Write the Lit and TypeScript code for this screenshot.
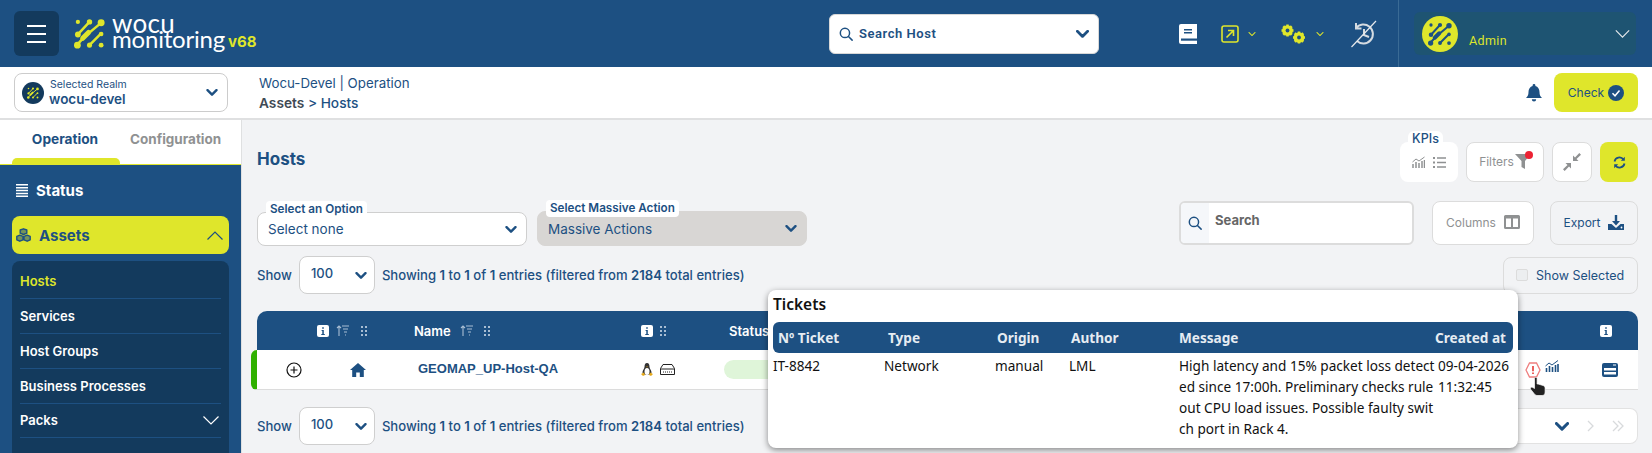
import { LitElement, html, css, svg } from "lit";
import { customElement } from "lit/decorators.js";

const logoMark = (dot: string, w: number, h: number) => html`<svg width=${w} height=${h} viewBox="0 0 32 32" fill=${dot} stroke=${dot}>
  ${svg`<g stroke-width="2.6" stroke-linecap="round" fill="none">
    <path d="M16 4 4 17"/>
    <path d="M28 5 10 20 3 28"/>
    <path d="M16 28 27 17"/>
    <path d="M9 21 15 15" stroke-width="5.2"/>
  </g>
  <g stroke="none">
    <circle cx="4" cy="4" r="2.2"/><circle cx="16" cy="4" r="2.8"/><circle cx="28" cy="5" r="3.6"/>
    <circle cx="4" cy="17" r="3"/><circle cx="28" cy="16.500" r="2.400"/>
    <circle cx="3.500" cy="28" r="3.500"/><circle cx="16" cy="28" r="2.600"/><circle cx="28" cy="28" r="2.500"/>
  </g>`}
</svg>`;

const chev = (w = 12, sw = 2.6, c = "#1d5082") => html`<svg class="chev" width=${w} height=${Math.round(w * 0.62)} viewBox="0 0 12 7.5" fill="none" stroke=${c} stroke-width=${sw} stroke-linecap="round" stroke-linejoin="round">${svg`<path d="M1.2 1.2 6 6 10.8 1.2"/>`}</svg>`;
const thinChev = (w: number, c: string, up = false) => html`<svg width=${w} height=${Math.round(w * 0.56)} viewBox="0 0 16 9" fill="none" stroke=${c} stroke-width=${(16 / w) * 1.2}>${svg`<path d=${up ? "M.5 8.5 8 1 15.5 8.5" : "M.5.5 8 8 15.5.5"}/>`}</svg>`;
const searchIcon = (s: number) => html`<svg width=${s} height=${s} viewBox="0 0 16 16" fill="none" stroke="#1d5082" stroke-width="1.7" stroke-linecap="round">${svg`<circle cx="6.8" cy="6.8" r="5.3"/><path d="M10.8 10.8 15 15"/>`}</svg>`;
const infoIcon = html`<svg class="ii" width="12" height="12" viewBox="0 0 12 12">${svg`<rect width="12" height="12" rx="2" fill="#fff"/><path d="M4.6 5h2.2v4h1v1H4.3V9h1V6h-.7zM5.2 2.2h1.6v1.6H5.2z" fill="#1d5082"/>`}</svg>`;
const sortIcon = html`<svg width="13" height="11" viewBox="0 0 13 11" fill="none" stroke="#a9bed3" stroke-width="1.1">${svg`<path d="M3 11V1M1 3l2-2 2 2M6 1h7M7 4h5M8 7h3M9 10h1"/>`}</svg>`;
const dotsIcon = html`<svg width="6" height="10" viewBox="0 0 6 10" fill="#a9bed3">${svg`<rect width="2" height="2"/><rect x="4" width="2" height="2"/><rect y="4" width="2" height="2"/><rect x="4" y="4" width="2" height="2"/><rect y="8" width="2" height="2"/><rect x="4" y="8" width="2" height="2"/>`}</svg>`;
const gear = (x: number, y: number, r: number) => svg`<g transform="translate(${x} ${y})"><circle r=${r * 0.62} fill="none" stroke="#dfe62b" stroke-width=${r * 0.55}/><g stroke="#dfe62b" stroke-width=${r * 0.42}>${[0, 45, 90, 135].map((a) => svg`<path transform="rotate(${a})" d="M0 ${-r} V${r}"/>`)}</g><circle r=${r * 0.32} fill="#1d5082"/></g>`;

@customElement("app-root")
export class AppRoot extends LitElement {
  static styles = css`
    :host { display: block; width: 1652px; height: 453px; overflow: hidden; position: relative; background: #f2f3f5; font-family: Inter, "Noto Sans", sans-serif; color: #1d5082; }
    * { box-sizing: border-box; }
    svg { display: block; flex: none; }

    .top { height: 67px; background: #1d5082; display: flex; align-items: center; }
    .burger { width: 45px; height: 45px; margin-left: 14px; background: #133a5d; border-radius: 6px; display: flex; flex-direction: column; justify-content: center; align-items: center; gap: 6px; }
    .burger i { display: block; width: 19px; height: 2px; background: #fff; }
    .logo { margin-left: 15px; width: 240px; display: flex; align-items: center; }
    .brand { margin-left: 7px; color: #fff; font-family: Lato, sans-serif; position: relative; top: -3px; white-space: nowrap; }
    .brand b { font-weight: 400; display: block; font-size: 24px; line-height: 15px; letter-spacing: -.2px; }
    .brand b:first-child { font-size: 26px; letter-spacing: .3px; }
    .ver { font: 700 15px Inter, sans-serif; color: #dfe62b; margin-left: 3px; align-self: flex-end; margin-bottom: -1px; }
    .hostsearch { margin-left: 515px; width: 270px; height: 40px; background: #fff; border-radius: 6px; border: 1px solid #d8d8d8; display: flex; align-items: center; padding: 0 9px; gap: 6px; font: 600 13px Roboto, sans-serif; letter-spacing: .55px; }
    .hostsearch span { flex: 1; }
    .ticons { display: flex; align-items: center; margin-left: 80px; }
    .divider { width: 1px; height: 67px; background: #3a6b95; margin-left: 21px; }
    .admin { margin-left: 15px; width: 222px; height: 43px; background: #1e5472; border-radius: 6px; display: flex; align-items: center; padding: 0 6px 0 8px; }
    .avatar { width: 36px; height: 36px; border-radius: 50%; background: #dfe62b; display: flex; align-items: center; justify-content: center; }
    .admin span { color: #dfe62b; font: 400 12.5px Roboto, sans-serif; margin-left: 11px; flex: 1; padding-top: 14px; letter-spacing: .4px; }

    .sub { height: 53px; background: #fff; border-bottom: 2px solid #dfe0e1; display: flex; align-items: center; padding: 0 14px; }
    .realm { width: 214px; height: 39px; border: 1px solid #ccc; border-radius: 8px; display: flex; align-items: center; padding: 0 9px 0 7px; }
    .rico { width: 22px; height: 22px; border-radius: 50%; background: #133a5d; display: flex; align-items: center; justify-content: center; }
    .rtxt { flex: 1; margin-left: 5px; }
    .rtxt small { display: block; font-size: 10.5px; line-height: 12px; padding-left: 1px; }
    .rtxt strong { display: block; font-size: 13.5px; line-height: 16px; font-weight: 600; }
    .crumb { margin-left: 31px; flex: 1; font-size: 13.3px; line-height: 20px; padding-top: 1px; }
    .crumb b { display: block; font-weight: 500; font-size: 13.7px; }
    .crumb b em { font-style: normal; color: #3f4a55; font-weight: 600; }
    .check { margin-left: 12px; width: 84px; height: 39px; border-radius: 8px; background: #dfe62b; display: flex; align-items: center; justify-content: center; gap: 4px; font-size: 12px; }

    .body { display: flex; height: 333px; }
    aside { width: 242px; flex: none; background: #1d5082; border-right: 1px solid #dfe0e1; }
    .tabs { height: 45px; background: #fff; display: flex; border-bottom: 1px solid #dfe62b; position: relative; font-weight: 700; font-size: 13.7px; padding-top: 11px; }
    .tabs .t1 { width: 130px; text-align: center; }
    .tabs .t2 { color: #8f9192; font-size: 13.5px; }
    .tabs i { position: absolute; left: 12px; top: 38px; width: 108px; height: 6px; background: #dfe62b; border-radius: 5px 5px 0 0; }
    .status { height: 51px; display: flex; align-items: center; gap: 8px; padding-left: 16px; color: #fff; font-weight: 700; font-size: 15px; }
    .assets { margin: 0 12px; height: 38px; background: #dfe62b; border-radius: 8px; display: flex; align-items: center; padding: 0 6px 0 4px; gap: 8px; font-weight: 700; font-size: 15px; }
    .assets span { flex: 1; }
    .menu { margin: 7px 12px 0; background: #133a5d; border-radius: 8px 8px 0 0; height: 192px; padding: 3.5px 8px 0; }
    .menu div { height: 34.75px; border-bottom: 1px solid #1d5082; display: flex; align-items: center; justify-content: space-between; color: #fff; font-weight: 600; font-size: 13px; padding-right: 2px; }
    .menu div.on { color: #dfe62b; }

    main { flex: 1; padding: 22px 14px 0 15px; min-width: 0; position: relative; }
    .r1 { display: flex; align-items: center; height: 40px; gap: 8px; }
    h1 { margin: 0; flex: 1; font-size: 17px; font-weight: 700; padding-bottom: 7px; }
    .btn { height: 40px; border: 1px solid #dcdcdc; background: #fff; border-radius: 8px; display: flex; align-items: center; justify-content: center; font-size: 12px; color: #8f9192; gap: 1px; position: relative; }
    .kpis { width: 58px; border: 0; gap: 8px; position: relative; }
    .kpis span { position: absolute; left: 8px; top: -11px; width: 35px; height: 15px; background: #fff; border-radius: 6px 6px 0 0; color: #1d5082; font-size: 12.5px; font-weight: 500; text-align: center; line-height: 15px; }
    .filters { width: 78px; padding-bottom: 2px; }
    .filters u { position: absolute; right: 10px; top: 8px; width: 8px; height: 8px; border-radius: 50%; background: #ec2233; }
    .comp { width: 40px; }
    .refresh { width: 38px; background: #dfe62b; border: 0; }

    .r2 { display: flex; height: 45px; margin-top: 19px; align-items: flex-start; }
    .sel { position: relative; width: 270px; height: 34px; margin-top: 11px; background: #fff; border: 1px solid #cfcfcf; border-radius: 8px; display: flex; align-items: center; justify-content: space-between; padding: 0 9px 0 10px; font-size: 13.5px; }
    .sel.dis { background: #d8d6d4; border-color: #d8d6d4; margin-left: 10px; margin-top: 10px; height: 35px; }
    .sel label { position: absolute; top: -12px; left: 8px; height: 17px; background: #fff; border-radius: 4px; padding: 0 4px; font-size: 11.7px; font-weight: 600; line-height: 17px; white-space: nowrap; }
    .qs { margin-left: auto; margin-top: 0; width: 235px; height: 44px; border: 2px solid #dcdcdc; border-radius: 6px; background: #fff; display: flex; align-items: stretch; overflow: hidden; font-weight: 700; font-size: 13px; color: #666; }
    .qs b { width: 28px; background: #f5f7fa; display: flex; align-items: center; justify-content: center; }
    .qs span { display: flex; align-items: center; padding: 0 0 6px 6px; }
    .b2 { height: 44px; margin-left: 18px; border: 1px solid #dcdcdc; border-radius: 8px; background: #fff; display: flex; align-items: center; justify-content: center; gap: 8px; font-size: 12px; color: #8f9192; width: 102px; padding-bottom: 2px; }
    .b2.exp { margin-left: 16px; width: 88px; background: transparent; color: #1d5082; }

    .r3 { display: flex; align-items: center; height: 38px; margin-top: 10px; font-size: 13.1px; font-weight: 500; }
    .sm { width: 76px; height: 38px; border: 1px solid #cfcfcf; background: #fff; border-radius: 8px; display: flex; align-items: center; justify-content: space-between; padding: 0 7px 4px 11px; margin: 0 7px 0 7px; font-size: 13px; font-weight: 500; }
    .sm svg { margin-top: 5px; }
    .info { flex: 1; }
    .info b { font-weight: 600; }
    .shsel { width: 135px; height: 37px; border: 1px solid #dcdcdc; border-radius: 8px; display: flex; align-items: center; padding-left: 12px; gap: 8px; font-weight: 400; font-size: 12.5px; }
    .shsel i { width: 12px; height: 12px; background: #eceef0; border: 1px solid #dcdcdc; border-radius: 2px; }

    .table { margin-top: 17px; }
    .thead, .trow { display: grid; grid-template-columns: 60px 97px 227px 83px 786px 90px 39px; align-items: center; }
    .thead { height: 39px; background: #1d5082; border-radius: 10px 10px 0 0; color: #fff; font-weight: 600; font-size: 13px; }
    .thead > div { display: flex; align-items: center; }
    .trow { height: 40px; background: #fff; border-bottom: 1px solid #dcdcdc; border-left: 6px solid #2fb000; border-radius: 6px 0 0 6px; margin-left: -6px; }
    .trow > div { display: flex; align-items: center; }
    .gap { gap: 7px; }
    .name { font: 700 13px "Liberation Sans", sans-serif; padding: 0 0 2px 4px; }
    .pill { width: 100px; height: 19px; background: #dff5d9; border-radius: 10px; }
    .pager { height: 36px; margin-left: auto; width: 120px; background: #fff; border: 1px solid #e2e2e2; border-left: 0; border-radius: 0 8px 8px 0; display: flex; align-items: center; gap: 18px; padding-left: 37px; }
    .r4 { margin-top: 17px; }

    .pop { position: absolute; left: 768px; top: 290px; width: 750px; height: 158px; background: #fff; border-radius: 8px; box-shadow: 0 2px 6px rgba(0,0,0,.45); font-family: "Noto Sans", sans-serif; color: #111; padding: 4px 5px; font-size: 13.6px; z-index: 5; }
    .pop h3 { margin: 0; font-size: 15.5px; font-weight: 600; line-height: 21px; }
    .grid { display: grid; grid-template-columns: 111px 111px 74px 110px 258px 76px; margin-top: 7px; }
    .hd { background: #1d5082; height: 31px; color: #e6ecf2; font-weight: 700; display: flex; align-items: center; padding-left: 5px; margin-bottom: 2px; white-space: nowrap; }
    .hd:first-child { border-radius: 6px 0 0 6px; }
    .hd.p2 { padding-left: 2px; }
    .hd.p1 { padding-left: 0; }
    .hd:nth-child(6) { border-radius: 0 6px 6px 0; justify-content: flex-end; padding: 0 7px 0 0; }
    .c { line-height: 21px; white-space: nowrap; }
    .c span { display: block; }
    .cr { padding-left: 1px; }
    .hand { position: absolute; left: 1530px; top: 377px; z-index: 6; }
  `;

  render() {
    const lime = "#dfe62b";
    return html`
      <div class="top">
        <div class="burger"><i></i><i></i><i></i></div>
        <div class="logo">${logoMark(lime, 31, 33)}<div class="brand"><b>wocu</b><b>monitoring</b></div><span class="ver">v68</span></div>
        <div class="hostsearch">${searchIcon(14)}<span>Search Host</span>${chev(13)}</div>
        <div class="ticons">
          <svg width="18" height="20" viewBox="0 0 18 20">${svg`<path d="M2 0h16v20H2a2 2 0 0 1-2-2V2a2 2 0 0 1 2-2z" fill="#fff"/><path d="M5 5h8v1.6H5zM5 8h8v1.6H5z" fill="#1d5082"/><path d="M2 14.5h16v2.2H2z" fill="#1d5082"/>`}</svg>
          <svg style="margin-left:24px" width="18" height="18" viewBox="0 0 18 18" fill="none" stroke="#dfe62b" stroke-width="1.6">${svg`<rect x="1" y="1" width="16" height="16" rx="2"/><path d="M5.5 12.5 12.5 5.5M7 5.5h5.5V11"/>`}</svg>
          <span style="margin-left:9px">${thinChev(8, lime)}</span>
          <svg style="margin-left:25px" width="25" height="20" viewBox="0 0 25 20">${gear(6.5, 6.5, 6)}${gear(18, 13.5, 6)}</svg>
          <span style="margin-left:10px">${thinChev(8, lime)}</span>
          <svg style="margin-left:26px" width="27" height="28" viewBox="0 0 27 28" fill="none" stroke="#d5dbe1" stroke-width="2">${svg`<path d="M6 8a9.5 9.5 0 1 1 1 13M6 3v5.5h5.5M14 9v6l5 2"/><path d="M1.5 27 26 1" stroke-width="1.2" stroke="#e6e9ec"/>`}</svg>
        </div>
        <div class="divider"></div>
        <div class="admin"><div class="avatar">${logoMark("#1d5082", 24, 26)}</div><span>Admin</span>${thinChev(15, "#e6e9ec")}</div>
      </div>

      <div class="sub">
        <div class="realm">
          <div class="rico">${logoMark(lime, 12, 12)}</div>
          <div class="rtxt"><small>Selected Realm</small><strong>wocu-devel</strong></div>
          ${chev(12)}
        </div>
        <div class="crumb">Wocu-Devel | Operation<b><em>Assets</em> &gt; Hosts</b></div>
        <svg width="16" height="18" viewBox="0 0 16 18" fill="#1d5082">${svg`<path d="M8 0a1.4 1.4 0 0 1 1.4 1.4v.5C12 2.500 13.500 5 13.500 8c0 3 .8 4.500 2.500 6H0c1.700-1.500 2.500-3 2.500-6 0-3 1.500-5.500 4.100-6.100v-.5A1.400 1.400 0 0 1 8 0z"/><path d="M5.800 15.200h4.400a2.200 2.200 0 0 1-4.400 0z"/>`}</svg>
        <div class="check">Check <svg width="16" height="16" viewBox="0 0 16 16">${svg`<circle cx="8" cy="8" r="8" fill="#1d5082"/><path d="M4.500 8.300 7 10.800 11.500 5.500" fill="none" stroke="#fff" stroke-width="1.500"/>`}</svg></div>
      </div>

      <div class="body">
        <aside>
          <div class="tabs"><span class="t1">Operation</span><span class="t2">Configuration</span><i></i></div>
          <div class="status">
            <svg width="12" height="13" viewBox="0 0 12 13" fill="#fff">${svg`<path d="M0 0h12v1.500H0zM0 2.900h12v1.500H0zM0 5.800h12v1.500H0zM0 8.700h12v1.500H0zM0 11.500h12v1.500H0z"/>`}</svg>
            Status
          </div>
          <div class="assets">
            <svg width="15" height="14" viewBox="0 0 15 14" fill="none" stroke="#1d5082" stroke-width="1.400" stroke-linejoin="round">${svg`<path d="M7.500.8 10.800 2v3.200L7.500 6.500 4.200 5.200V2zM3.800 7.200 7 8.400v3.400l-3.200 1.400L.8 11.800V8.400zM11.200 7.200l3 1.200v3.400l-3 1.400L8 11.800V8.400z" fill="#1d5082" fill-opacity=".55"/>`}</svg>
            <span>Assets</span>${thinChev(16, "#1d5082", true)}
          </div>
          <div class="menu">
            <div class="on">Hosts</div><div>Services</div><div>Host Groups</div><div>Business Processes</div>
            <div>Packs ${thinChev(16, "#fff")}</div>
          </div>
        </aside>
        <main>
          <div class="r1">
            <h1>Hosts</h1>
            <div class="btn kpis"><span>KPIs</span>
              <svg width="13" height="12" viewBox="0 0 13 12" fill="none" stroke="#8f9192">${svg`<path d="M.5 6 4 3l3 2 5.500-4" stroke-width="1"/><path d="M1 12V8M4 12V6M7 12V7M10 12V5M12.500 12V4" stroke-width="1.500"/>`}</svg>
              <svg width="13" height="11" viewBox="0 0 13 11" fill="#8f9192">${svg`<path d="M0 0h2v2H0zM4 .300h9v1.400H4zM0 4.500h2v2H0zM4 4.800h9v1.400H4zM0 9h2v2H0zM4 9.300h9v1.400H4z"/>`}</svg>
            </div>
            <div class="btn filters">Filters<svg width="16" height="15" viewBox="0 0 16 15" fill="#8f9192">${svg`<path d="M0 0h16L10 7v8L6.500 13V7z"/>`}</svg><u></u></div>
            <div class="btn comp"><svg width="18" height="18" viewBox="0 0 18 18" fill="#8f9192">${svg`<path d="M10 8V2.500l2 2L16.300 0 18 1.700 13.500 6l2 2zM8 10v5.500l-2-2L1.700 18 0 16.300 4.500 12l-2-2z"/>`}</svg></div>
            <div class="btn refresh"><svg width="13" height="13" viewBox="0 0 13 13" fill="none" stroke="#1d5082" stroke-width="1.800">${svg`<path d="M1.500 5.500A5 5 0 0 1 10.500 3.500M11.500 7.500A5 5 0 0 1 2.500 9.500"/><path d="M11.800.8v4H7.800zM1.200 12.200v-4h4z" fill="#1d5082" stroke="none"/>`}</svg></div>
          </div>

          <div class="r2">
            <div class="sel"><label>Select an Option</label>Select none ${chev(12)}</div>
            <div class="sel dis"><label>Select Massive Action</label>Massive Actions ${chev(12)}</div>
            <div class="qs"><b>${searchIcon(14)}</b><span>Search</span></div>
            <div class="b2">Columns<svg width="16" height="14" viewBox="0 0 16 14" fill="#8f9192">${svg`<path d="M1.500 0h13A1.500 1.500 0 0 1 16 1.500v11a1.500 1.500 0 0 1-1.500 1.500h-13A1.500 1.500 0 0 1 0 12.500v-11A1.500 1.500 0 0 1 1.500 0zM2 3.500V12h5V3.500zM9 3.500V12h5V3.500z" fill-rule="evenodd"/>`}</svg></div>
            <div class="b2 exp">Export<svg width="16" height="15" viewBox="0 0 16 15" fill="#1d5082">${svg`<path d="M6.800 0h2.400v6H12L8 10.500 4 6h2.800zM0 9h3.500L8 13l4.500-4H16v6H0z"/><circle cx="13.500" cy="12.500" r=".9" fill="#fff"/>`}</svg></div>
          </div>

          <div class="r3">Show <div class="sm">100 ${chev(12)}</div>
            <div class="info">Showing <b>1</b> to <b>1</b> of <b>1</b> entries (filtered from <b>2184</b> total entries)</div>
            <div class="shsel"><i></i>Show Selected</div>
          </div>

          <div class="table">
            <div class="thead">
              <div></div>
              <div class="gap">${infoIcon}${sortIcon}<span style="margin-left:5px">${dotsIcon}</span></div>
              <div style="padding-left:0">Name <span style="margin-left:9px">${sortIcon}</span><span style="margin-left:11px">${dotsIcon}</span></div>
              <div class="gap">${infoIcon}${dotsIcon}</div>
              <div style="padding-left:5px">Status</div>
              <div></div>
              <div>${infoIcon}</div>
            </div>
            <div class="trow">
              <div style="padding-left:29px"><svg width="16" height="16" viewBox="0 0 16 16" fill="none" stroke="#111" stroke-width="1.200">${svg`<circle cx="8" cy="8" r="7"/><path d="M8 4.500v7M4.500 8h7"/>`}</svg></div>
              <div style="padding-left:33px"><svg width="16" height="14" viewBox="0 0 16 14" fill="#1d5082">${svg`<path d="M8 0 16 7h-2.200v7H9.800V9.500H6.200V14H2.200V7H0z"/>`}</svg></div>
              <div class="name">GEOMAP_UP-Host-QA</div>
              <div class="gap">
                <svg width="12" height="13" viewBox="0 0 12 13">${svg`<path d="M6 0C4 0 3.500 2 3.500 4 3.200 6 1.500 7.500 1.500 9.500 1.500 11 3 12 6 12s4.500-1 4.500-2.500C10.500 7.500 8.800 6 8.500 4 8.500 2 8 0 6 0z" fill="#333"/><ellipse cx="6" cy="8.500" rx="2.500" ry="3.500" fill="#fff"/><path d="M0 11l3-1.500 1 2.500-2 1zM12 11 9 9.500l-1 2.500 2 1zM5 3.500h2l-1 1z" fill="#e6a817"/>`}</svg>
                <svg width="15" height="11" viewBox="0 0 15 11" fill="none" stroke="#222">${svg`<path d="M3 .500h9l2.500 4v6H.500v-6zM.500 5h14"/><path d="M3 8h9" stroke-dasharray="1 1"/>`}</svg>
              </div>
              <div><div class="pill"></div></div>
              <div style="padding-left:15px;gap:4px">
                <svg width="16" height="16" viewBox="0 0 16 16">${svg`<path d="M4.500 1h7L15 8l-3.500 7h-7L1 8z" fill="#fff" stroke="#ee7f7f" stroke-width="1.300"/><path d="M7.200 4h1.600v5.200H7.200zM7.200 10.500h1.600v1.600H7.200z" fill="#e53935"/>`}</svg>
                <svg style="margin-top:-8px" width="14" height="12" viewBox="0 0 14 12" fill="none" stroke="#1d5082">${svg`<path d="M.5 6 4 3l3 2 6-4.500" stroke-width="1"/><path d="M1.500 12V8M4.500 12V6M7.500 12V7M10.500 12V5M13 12V4" stroke-width="1.600"/>`}</svg>
              </div>
              <div><svg style="margin-left:2px" width="16" height="14" viewBox="0 0 16 14">${svg`<rect width="16" height="14" rx="2" fill="#1d5082"/><path d="M2 5h12v2.500H2zM2 9h12v2.500H2z" fill="#fff"/><path d="M11 2h3" stroke="#fff"/>`}</svg></div>
            </div>
          </div>

          <div class="r3 r4">Show <div class="sm">100 ${chev(12)}</div>
            <div class="info">Showing <b>1</b> to <b>1</b> of <b>1</b> entries (filtered from <b>2184</b> total entries)</div>
            <div class="pager">${chev(14)}
              <svg width="7" height="12" viewBox="0 0 7 12" fill="none" stroke="#d8dadc" stroke-width="1.300">${svg`<path d="M1 1l5 5-5 5"/>`}</svg>
              <svg width="12" height="12" viewBox="0 0 12 12" fill="none" stroke="#d8dadc" stroke-width="1.300">${svg`<path d="M1 1l5 5-5 5M6 1l5 5-5 5"/>`}</svg>
            </div>
          </div>
        </main>
      </div>

      <div class="pop">
        <h3>Tickets</h3>
        <div class="grid">
          <div class="hd">Nº Ticket</div><div class="hd" style="padding-left:4px">Type</div><div class="hd p2">Origin</div><div class="hd p2">Author</div><div class="hd p1">Message</div><div class="hd">Created at</div>
          <div class="c">IT-8842</div><div class="c">Network</div><div class="c">manual</div><div class="c">LML</div>
          <div class="c"><span>High latency and 15% packet loss detect</span><span>ed since 17:00h. Preliminary checks rule</span><span>out CPU load issues. Possible faulty swit</span><span>ch port in Rack 4.</span></div>
          <div class="c cr"><span>09-04-2026</span><span>11:32:45</span></div>
        </div>
      </div>
      <svg class="hand" width="16" height="19" viewBox="0 0 16 19">${svg`<path d="M4.500 1.500a1.300 1.300 0 0 1 2.600 0V7h1l5 1.500c1.500.5 2 1.500 2 3V15c0 2-1 3.500-3 3.500H7c-1.500 0-2-1-3-2L.800 12.500c-.8-1-.2-2.500 1.200-2.500l2.500 1.500z" fill="#222" stroke="#fff" stroke-width=".7"/>`}</svg>
    `;
  }
}
